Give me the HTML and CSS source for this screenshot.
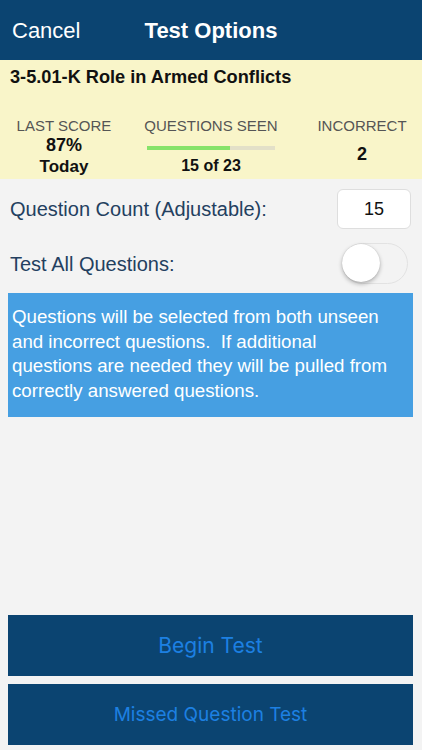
FILE: index.html
```html
<!DOCTYPE html>
<html>
<head>
<meta charset="utf-8">
<link rel="stylesheet" href="styles.css">
</head>
<body>
<div class="screen">
  <header class="nav">
    <span class="nav-left">Cancel</span>
    <span class="nav-title">Test Options</span>
  </header>
  <section class="summary">
    <div class="topic">3-5.01-K Role in Armed Conflicts</div>
    <div class="stats">
      <div class="stat">
        <div class="stat-label">LAST SCORE</div>
        <div class="stat-value">87%</div>
        <div class="stat-value sub">Today</div>
      </div>
      <div class="stat">
        <div class="stat-label">QUESTIONS SEEN</div>
        <div class="bar"><div class="bar-fill" style="width:65.2%"></div></div>
        <div class="stat-value seen">15 of 23</div>
      </div>
      <div class="stat last">
        <div class="stat-label">INCORRECT</div>
        <div class="stat-value single">2</div>
      </div>
    </div>
  </section>
  <main class="options">
    <div class="row count-row">
      <span class="row-label">Question Count (Adjustable):</span>
      <div class="count-box">15</div>
    </div>
    <div class="row toggle-row">
      <span class="row-label">Test All Questions:</span>
      <div class="toggle"><div class="knob"></div></div>
    </div>
    <div class="note">Questions will be selected from both unseen and incorrect questions.&nbsp; If additional questions are needed they will be pulled from correctly answered questions.</div>
    <div class="actions">
      <div class="btn">Begin Test</div>
      <div class="btn small">Missed Question Test</div>
    </div>
  </main>
</div>
</body>
</html>
```

FILE: styles.css
```css
* { box-sizing: border-box; }
html, body { margin: 0; padding: 0; }
body {
  width: 422px;
  height: 750px;
  background: #f3f3f3;
  font-family: "Liberation Sans", Arial, sans-serif;
  overflow: hidden;
}
.screen {
  display: flex;
  flex-direction: column;
  height: 750px;
}
.nav {
  height: 60px;
  background: #0b4471;
  color: #fff;
  position: relative;
  display: flex;
  align-items: center;
  padding: 2px 12px 0;
}
.nav-left {
  font-size: 22px;
}
.nav-title {
  position: absolute;
  left: 0;
  right: 0;
  text-align: center;
  font-size: 22px;
  font-weight: bold;
  pointer-events: none;
}
.summary {
  background: #f9f5c9;
  height: 119px;
  padding: 7px 10px 0;
  color: #111;
}
.topic {
  font-size: 18.2px;
  line-height: 20px;
  font-weight: bold;
}
.stats {
  margin-top: 30px;
  margin-left: -10px;
  margin-right: -10px;
  display: grid;
  grid-template-columns: 128px 166px 1fr;
}
.stat {
  display: flex;
  flex-direction: column;
  align-items: center;
}
.stat.last { padding-left: 8px; }
.stat-label {
  font-size: 15px;
  line-height: 18px;
  color: #555;
}
.stat-value {
  font-size: 18px;
  line-height: 20px;
  font-weight: bold;
  color: #111;
}
.stat-value.sub { font-size: 17px; margin-top: 2px; }
.stat-value.seen { font-size: 16px; margin-top: 6px; }
.stat-value.single { margin-top: 9px; }
.bar {
  margin-top: 11px;
  width: 128px;
  height: 4px;
  background: #e3e0c8;
}
.bar-fill {
  height: 100%;
  background: #86e36a;
}
.options {
  flex: 1;
  display: flex;
  flex-direction: column;
  padding: 10px 9px 5px 8px;
}
.row {
  display: flex;
  align-items: center;
  justify-content: space-between;
}
.row-label {
  font-size: 20px;
  color: #23405f;
  padding-left: 2px;
}
.count-row { height: 40px; }
.count-box {
  width: 74px;
  height: 40px;
  margin-right: 2px;
  background: #fff;
  border: 1px solid #dedede;
  border-radius: 6px;
  display: flex;
  align-items: center;
  justify-content: center;
  font-size: 18px;
  color: #111;
}
.toggle-row { height: 42px; margin-top: 13px; }
.toggle-row .row-label { padding-top: 3px; }
.toggle {
  width: 66px;
  height: 41px;
  margin-right: 5px;
  border-radius: 21px;
  background: #f3f3f3;
  border: 1.5px solid #e2e2e2;
  position: relative;
}
.knob {
  position: absolute;
  left: -1px;
  top: 0;
  width: 38px;
  height: 38px;
  border-radius: 50%;
  background: #fff;
  box-shadow: 0 2px 4px rgba(0,0,0,0.28), 0 0 1px rgba(0,0,0,0.2);
}
.note {
  margin-top: 9px;
  background: #469fe2;
  color: #fff;
  font-size: 18.7px;
  line-height: 24.5px;
  padding: 12px 12px 14px 4px;
}
.actions {
  margin-top: auto;
  display: flex;
  flex-direction: column;
  gap: 8px;
}
.btn {
  height: 61px;
  background: #0b4471;
  color: #1d80e2;
  font-family: Inter, "Liberation Sans", sans-serif;
  font-size: 21px;
  display: flex;
  align-items: center;
  justify-content: center;
}
.btn.small { font-size: 19px; }
```
